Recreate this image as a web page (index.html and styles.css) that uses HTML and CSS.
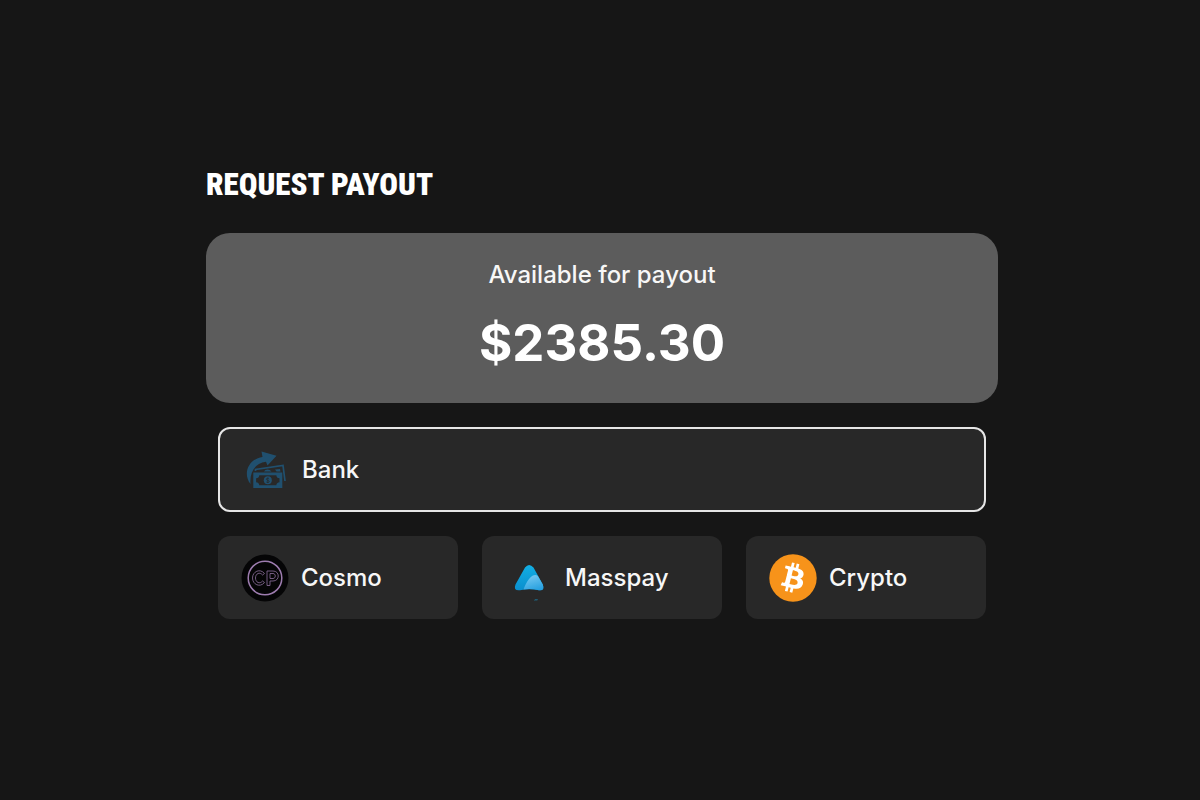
FILE: index.html
```html
<!DOCTYPE html>
<html lang="en">
<head>
<meta charset="utf-8">
<meta name="viewport" content="width=device-width, initial-scale=1">
<title>Request payout</title>
<link rel="stylesheet" href="styles.css">
</head>
<body>
<main class="payout">
  <h1 class="title">REQUEST PAYOUT</h1>
  <section class="balance">
    <p class="balance-label">Available for payout</p>
    <p class="balance-amount">$2385.30</p>
  </section>
  <div class="methods">
    <button class="method method-selected" type="button" aria-pressed="true">
      <svg class="icon" viewBox="0 0 48 48" aria-hidden="true">
        <path d="M8.500 38C1 29 5 13.500 20.500 11L19.500 5.500 34.500 9.800 25.500 19.500 24 15.800C13 17 7.500 26 8.500 38z" fill="#20506f"/>
        <path d="M13.500 25v-1.500L41 19.500 43 35" fill="none" stroke="#20506f" stroke-width="1.700"/>
        <path d="M22 25.500q1-2 3.500-2t4 2z" fill="#20506f"/>
        <path d="M33 23.500l5-.6.500 2.600h-4z" fill="#20506f"/>
        <path fill="#20506f" fill-rule="evenodd" d="M11.300 26.500h29v15.500h-29zM17.300 29.200c-.2 1.900-1.200 2.900-3.200 3.100v3.900c2 .2 3 1.200 3.200 3.100h17c.2-1.900 1.200-2.900 3.200-3.100v-3.900c-2-.2-3-1.200-3.200-3.100z"/>
        <circle cx="25.800" cy="34.300" r="4" fill="#20506f"/>
        <path d="M27.200 32.900c-.5-1-2.900-1-2.900.3 0 1.400 3 1 3 2.300 0 1.300-2.600 1.300-3.100.3M25.800 31.600v5.400" fill="none" stroke="#282828" stroke-width=".7"/>
      </svg>
      <span>Bank</span>
    </button>
    <button class="method" type="button" aria-pressed="false">
      <svg class="icon" viewBox="0 0 48 48" aria-hidden="true">
        <circle cx="24" cy="24" r="23.500" fill="#050506"/>
        <circle cx="24" cy="24" r="16.800" fill="none" stroke="#9d7caf" stroke-width="1.500"/>
        <g fill="none" stroke="#80658f" stroke-width=".9" stroke-linejoin="round">
          <path d="M23.500 19.500C19 14 11.500 17.500 11.500 24s7.500 10 12 4.500l-2-1.500c-2.700 3.500-7 1.500-7-3s4.300-6.500 7-3z"/>
          <path d="M26 17h6c7 0 7 10 0 10h-3v4.500h-3zM29 19.500h3c3 0 3 5 0 5h-3z"/>
        </g>
      </svg>
      <span>Cosmo</span>
    </button>
    <button class="method" type="button" aria-pressed="false">
      <svg class="icon" viewBox="0 0 48 48" aria-hidden="true">
        <defs>
          <linearGradient id="peak" x1="0" y1="0" x2="0" y2="1"><stop offset="0" stop-color="#12afe4"/><stop offset="1" stop-color="#0a8ecd"/></linearGradient>
          <linearGradient id="slope" x1=".3" y1="0" x2=".7" y2="1"><stop offset="0" stop-color="#76c9f2"/><stop offset="1" stop-color="#259fdf"/></linearGradient>
        </defs>
        <path d="M20 13.500Q24 8.500 28.500 13.500L37.800 30.500Q40 37 34 36.300 24 34 15 36.300 8 37 10.500 30.500z" fill="url(#peak)"/>
        <path d="M18.500 35.500C20.500 30 24 24 27.500 21.800q3.200-1.800 5.500.5L37.800 30.500q2.200 6.500-3.800 5.800-8-1.900-15.500-.8z" fill="url(#slope)"/>
        <path d="M29 46.600l1-1.100h3l-.7.800h-2z" fill="#168fc0"/>
      </svg>
      <span>Masspay</span>
    </button>
    <button class="method" type="button" aria-pressed="false">
      <svg class="icon" viewBox="0 0 48 48" aria-hidden="true">
        <circle cx="24" cy="24" r="23.700" fill="#f7931a"/>
        <path transform="scale(.75)" d="M46.100 27.440c.64-4.260-2.600-6.550-7.030-8.070l1.440-5.760-3.500-.87-1.400 5.600c-.92-.23-1.870-.45-2.810-.66l1.410-5.640-3.510-.87-1.430 5.760c-.76-.18-1.510-.35-2.240-.53v-.02l-4.840-1.200-.93 3.740s2.600.6 2.550.63c1.420.36 1.680 1.300 1.630 2.040l-1.640 6.570c.1.030.23.060.36.120l-.37-.09-2.300 9.200c-.17.430-.62 1.080-1.600.83.030.05-2.550-.64-2.550-.64l-1.740 4.020 4.560 1.140c.85.210 1.680.43 2.500.64l-1.450 5.830 3.500.87 1.440-5.760c.96.260 1.890.5 2.800.72l-1.440 5.740 3.510.87 1.450-5.810c5.980 1.130 10.480.67 12.370-4.740 1.530-4.350-.07-6.860-3.220-8.500 2.290-.53 4.020-2.040 4.480-5.160zm-8.010 11.240c-1.090 4.350-8.410 2-10.790 1.410l1.930-7.710c2.370.59 9.990 1.760 8.860 6.300zm1.080-11.300c-.99 3.960-7.090 1.950-9.070 1.450l1.750-7c1.970.5 8.350 1.420 7.320 5.550z" fill="#fff"/>
      </svg>
      <span>Crypto</span>
    </button>
  </div>
</main>
</body>
</html>
```
FILE: styles.css
```css
* {
  box-sizing: border-box;
}

body {
  margin: 0;
  min-height: 100vh;
  padding: 169px calc(17% - 2px) 40px calc(17% + 2px);
  background: #161616;
  color: #f7f7f7;
  font-family: Inter, "Liberation Sans", sans-serif;
}

.title {
  margin: 0 0 32px;
  color: #fff;
  font-family: "Roboto Condensed", Roboto, sans-serif;
  font-size: 31px;
  font-weight: 900;
  line-height: 32px;
}

.balance {
  padding: 24px 24px 30px;
  border-radius: 24px;
  background: #5c5c5c;
  text-align: center;
}

.balance-label {
  margin: 0 0 20px;
  font-size: 24px;
  font-weight: 500;
  line-height: 36px;
}

.balance-amount {
  margin: 0;
  color: #fff;
  font-size: 51px;
  font-weight: 700;
  line-height: 60px;
}

.methods {
  display: grid;
  grid-template-columns: repeat(3, 1fr);
  gap: 24px;
  padding: 24px 12px 0;
}

.method {
  display: flex;
  align-items: center;
  gap: 12px;
  min-width: 0;
  padding: 18px 23px 17px;
  border: 0;
  border-radius: 12px;
  background: #282828;
  color: inherit;
  font: 500 24px/32px Inter, "Liberation Sans", sans-serif;
  cursor: pointer;
}

.method-selected {
  grid-column: 1 / -1;
  padding: 17px 22px 16px;
  border: 2px solid #e6e6e6;
}

.icon {
  flex: none;
  width: 48px;
  height: 48px;
}
```
